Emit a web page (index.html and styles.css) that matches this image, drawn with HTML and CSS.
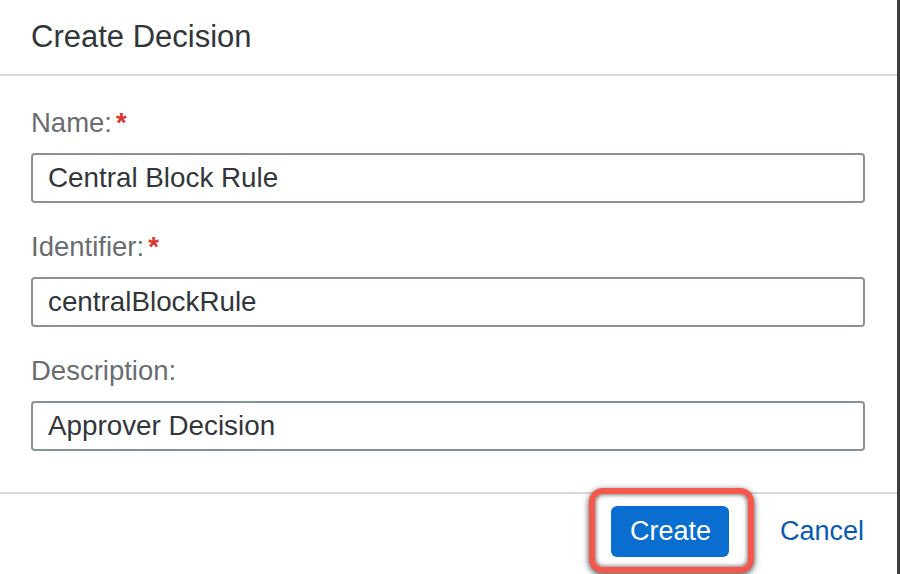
FILE: index.html
```html
<!DOCTYPE html>
<html lang="en">
<head>
<meta charset="utf-8">
<title>Create Decision</title>
<link rel="stylesheet" href="styles.css">
</head>
<body>
<div class="page">
  <div class="dialog">
    <header class="dialog-header">
      <h1 class="dialog-title">Create Decision</h1>
    </header>
    <main class="dialog-body">
      <div class="field">
        <label class="field-label">Name:<span class="req">*</span></label>
        <div class="input">Central Block Rule</div>
      </div>
      <div class="field">
        <label class="field-label">Identifier:<span class="req">*</span></label>
        <div class="input">centralBlockRule</div>
      </div>
      <div class="field">
        <label class="field-label">Description:</label>
        <div class="input">Approver Decision</div>
      </div>
    </main>
    <footer class="dialog-footer">
      <div class="highlight-wrap">
        <span class="highlight"></span>
        <button class="btn btn-primary">Create</button>
      </div>
      <button class="btn btn-link">Cancel</button>
    </footer>
  </div>
  <div class="edge"></div>
</div>
</body>
</html>
```

FILE: styles.css
```css
* { box-sizing: border-box; }

html, body {
  margin: 0;
  padding: 0;
  background: #ffffff;
}

body {
  font-family: "Liberation Sans", Arial, sans-serif;
  color: #32363a;
}

.page {
  display: flex;
  width: 900px;
  height: 574px;
  overflow: hidden;
}

.dialog {
  flex: 1;
  display: flex;
  flex-direction: column;
  background: #ffffff;
}

.edge {
  width: 3px;
  background: #3f3f3f;
}

.dialog-header {
  height: 76px;
  padding: 21px 31px 0;
  border-bottom: 2px solid #d9d9d9;
}

.dialog-title {
  margin: 0;
  font-size: 31px;
  line-height: 31px;
  font-weight: normal;
  color: #32363a;
}

.dialog-body {
  flex: 1;
  padding: 31px 32px 0 31px;
  display: flex;
  flex-direction: column;
  gap: 28px;
}

.field {
  display: flex;
  flex-direction: column;
  gap: 14px;
}

.field-label {
  font-size: 27.5px;
  line-height: 32px;
  color: #6a6d70;
}

.req {
  color: #d9352c;
  font-weight: bold;
  margin-left: 4px;
}

.input {
  height: 50px;
  border: 2px solid #89919a;
  border-radius: 4px;
  padding: 0 15px;
  font-size: 27.8px;
  line-height: 46px;
  color: #32363a;
  background: #ffffff;
}

.dialog-footer {
  height: 82px;
  border-top: 2px solid #d9d9d9;
  display: flex;
  justify-content: flex-end;
  align-items: flex-start;
  gap: 37px;
  padding: 12px 19px 0 0;
}

.highlight-wrap {
  position: relative;
  display: flex;
}

.highlight {
  position: absolute;
  left: -22px;
  right: -25px;
  top: -18px;
  bottom: -16px;
  border: 6px solid #f4574b;
  border-radius: 14px;
  background: #ffffff;
  box-shadow: 0 2px 6px rgba(0, 0, 0, 0.75), inset 0 0 5px rgba(0, 0, 0, 0.75);
}

.btn {
  position: relative;
  height: 51px;
  font-family: "Liberation Sans", Arial, sans-serif;
  font-size: 27px;
  border: none;
  margin: 0;
  cursor: pointer;
}

.btn-primary {
  background: #0a6ed1;
  color: #ffffff;
  border-radius: 6px;
  padding: 0 18px 0 19px;
}

.btn-link {
  background: transparent;
  color: #0a5ab0;
  padding: 0 14px;
}
```
